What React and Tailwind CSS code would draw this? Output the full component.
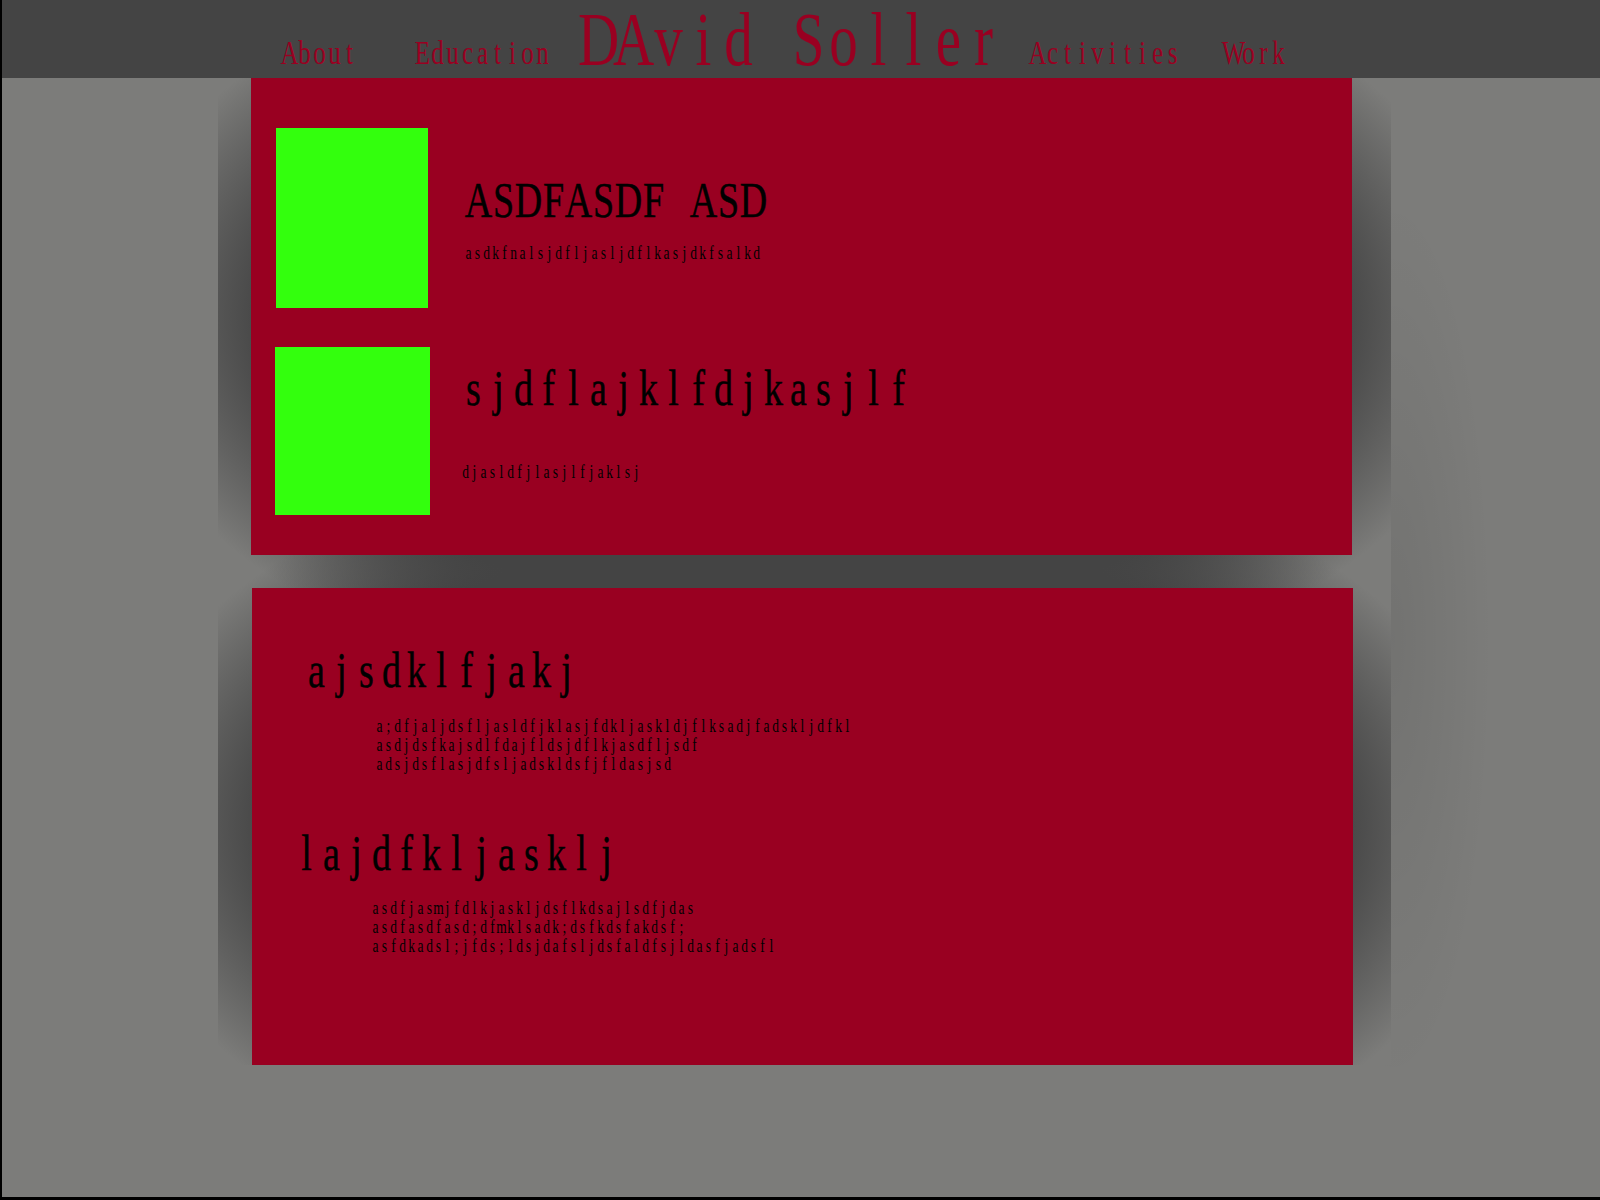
import React from 'react'

// monospaced serif look: each letter centred in a fixed-width cell,
// drawn at 3/4 width and stretched back up to full height
function Mono({ text, cell, glyph, stretch, className = '' }) {
    return (
        <div className={`flex whitespace-pre font-['Liberation_Serif',serif] ${className}`}>
            {text.split('').map((ch, i) => (
                <span key={i} className={`flex items-center justify-center ${cell}`}>
                    <span className={`leading-none ${glyph} ${stretch}`}>{ch}</span>
                </span>
            ))}
        </div>
    )
}

const Nav = ({ text, className }) => (
    <Mono text={text} cell="w-[15px] h-[33px]" glyph="text-[25px]" stretch="scale-y-[1.32]" className={`mt-[35px] ${className}`} />
)

const Heading = ({ text, className = '' }) => (
    <Mono text={text} cell="w-[25px] h-[51px]" glyph="text-[38px] [-webkit-text-stroke:0.35px_black]" stretch="scale-y-[1.342]" className={className} />
)

const Small = ({ text, className = '' }) => (
    <Mono text={text} cell="w-[9px] h-[19px]" glyph="text-[13.5px]" stretch="scale-y-[1.3333]" className={className} />
)

function Header() {
    return (
        <div className="h-[78px] bg-[#444444] flex items-start pt-[1px] text-[#990021]">
            <Nav text="About" className="ml-[280px]" />
            <Nav text="Education" className="ml-[58px]" />
            <Mono text="DAvid Soller" cell="w-[35px] h-[76px]" glyph="text-[57px]" stretch="scale-y-[1.3333]" className="ml-[31px]" />
            <Nav text="Activities" className="ml-[29px]" />
            <Nav text="Work" className="ml-[46px]" />
        </div>
    )
}

function App() {
    return (
        <div className="w-full h-[1200px] bg-[#7c7c7a] bg-[image:radial-gradient(ellipse_100px_450px_at_1391px_640px,rgba(0,0,0,0.08),transparent)] border-l-2 border-b-[3px] border-black overflow-hidden">
            <Header />

            <div className="ml-[216px] w-[1173px] h-[987px] bg-[#7c7c7a] bg-[image:radial-gradient(ellipse_700px_400px_at_583px_238px,#444444_76%,transparent_100%),radial-gradient(ellipse_700px_400px_at_584px_748px,#444444_76%,transparent_100%)]">
                {/* first block */}
                <div className="ml-[33px] w-[1101px] h-[477px] bg-[#990021] pt-[50px] text-black">
                    <div className="flex">
                        <div className="ml-[25px] w-[152px] h-[180px] bg-[#33ff0d]" />
                        <div className="ml-[36px] pt-[46px]">
                            <Heading text="ASDFASDF ASD" className="ml-[2px]" />
                            <Small text="asdkfnalsjdfljasljdflkasjdkfsalkd" className="mt-[19.5px]" />
                        </div>
                    </div>
                    <div className="flex mt-[39px]">
                        <div className="ml-[24px] w-[155px] h-[168px] bg-[#33ff0d]" />
                        <div className="ml-[31px] pt-[15px]">
                            <Heading text="sjdflajklfdjkasjlf" />
                            <Small text="djasldfjlasjlfjaklsj" className="mt-[50.5px]" />
                        </div>
                    </div>
                </div>

                {/* second block */}
                <div className="ml-[34px] mt-[33px] w-[1101px] h-[477px] bg-[#990021] pt-[56px] text-black">
                    <Heading text="ajsdklfjakj" className="ml-[52px]" />
                    <div className="ml-[123px] mt-[22px]">
                        <Small text="a;dfjaljdsfljasldfjklasjfdkljaskldjflksadjfadskljdfkl" />
                        <Small text="asdjdsfkajsdlfdajfldsjdflkjasdfljsdf" />
                        <Small text="adsjdsflasjdfsljadskldsfjfldasjsd" />
                    </div>
                    <Heading text="lajdfkljasklj" className="ml-[42px] mt-[53px]" />
                    <div className="ml-[119px] mt-[21px]">
                        <Small text="asdfjasmjfdlkjaskljdsflkdsajlsdfjdas" />
                        <Small text="asdfasdfasd;dfmklsadk;dsfkdsfakdsf;" />
                        <Small text="asfdkadsl;jfds;ldsjdafsljdsfaldfsjldasfjadsfl" />
                    </div>
                </div>
            </div>
        </div>
    )
}

export default App
